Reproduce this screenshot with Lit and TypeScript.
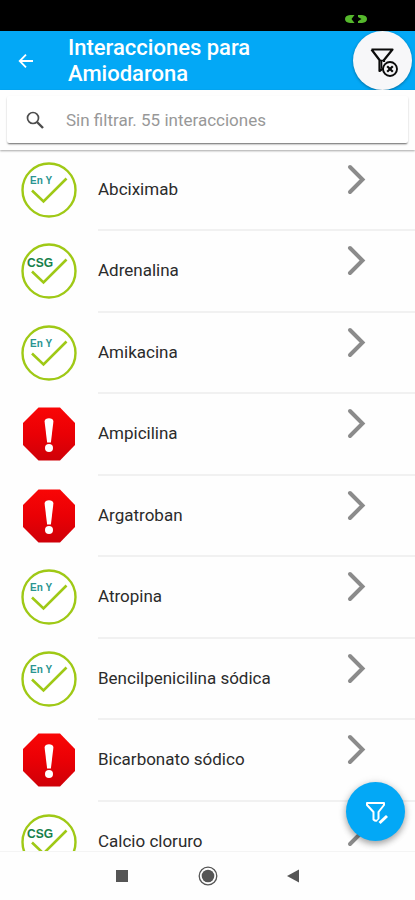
import { LitElement, html, css, svg } from "lit";
import { customElement, property } from "lit/decorators.js";

type Level = "eny" | "csg" | "stop";

interface Interaction {
  name: string;
  level: Level;
}

const INTERACTIONS: Interaction[] = [
  { name: "Abciximab", level: "eny" },
  { name: "Adrenalina", level: "csg" },
  { name: "Amikacina", level: "eny" },
  { name: "Ampicilina", level: "stop" },
  { name: "Argatroban", level: "stop" },
  { name: "Atropina", level: "eny" },
  { name: "Bencilpenicilina sódica", level: "eny" },
  { name: "Bicarbonato sódico", level: "stop" },
  { name: "Calcio cloruro", level: "csg" },
];

@customElement("compat-icon")
export class CompatIcon extends LitElement {
  @property() level: Level = "eny";

  static styles = css`
    :host {
      display: block;
      width: 56px;
      height: 56px;
    }
    svg {
      display: block;
    }
    .ring {
      fill: #fff;
      stroke: #9fc916;
      stroke-width: 2.4;
    }
    .check {
      fill: none;
      stroke: #9fc916;
      stroke-width: 2.6;
    }
    .tag {
      font-family: "Liberation Sans", Arial, sans-serif;
      font-weight: 700;
    }
    .eny {
      font-size: 10px;
      fill: #2a9490;
    }
    .csg {
      font-size: 12px;
      fill: #16804a;
    }
  `;

  render() {
    if (this.level === "stop") {
      return html`<svg width="56" height="56" viewBox="0 0 56 56" role="img" aria-label="Incompatible">
        <defs>
          <linearGradient id="red" x1="0" y1="0" x2="0" y2="1">
            <stop offset="0" stop-color="#f90606" />
            <stop offset="0.5" stop-color="#ea0005" />
            <stop offset="1" stop-color="#cf0008" />
          </linearGradient>
        </defs>
        <path d="M17.5 1.500h21.500L54 17v22L39 54.500H17.500L2 39V17z" fill="url(#red)" />
        <path d="M23.600 15.500c-.2-4.400 9-4.400 8.800 0L29.900 36.500h-3.800z" fill="#fff" />
        <circle cx="28" cy="42" r="4" fill="#fff" />
      </svg>`;
    }
    const label =
      this.level === "csg"
        ? svg`<text class="tag csg" x="6" y="24">CSG</text>`
        : svg`<text class="tag eny" x="9" y="22">En Y</text>`;
    return html`<svg width="56" height="56" viewBox="0 0 56 56">
      <circle class="ring" cx="28" cy="28" r="26.500" />
      <path class="check" d="M11 28.500 22.500 39.500 45.500 16.500" />
      ${label}
    </svg>`;
  }
}

@customElement("interaction-row")
export class InteractionRow extends LitElement {
  @property() name = "";
  @property() level: Level = "eny";

  static styles = css`
    :host {
      display: block;
      height: 100%;
    }
    .row {
      display: flex;
      box-sizing: border-box;
      height: 100%;
      width: 100%;
      padding: 0 0 0 21px;
      gap: 21px;
      border: 0;
      background: none;
      font: inherit;
      color: inherit;
      text-align: left;
      align-items: stretch;
    }
    compat-icon {
      align-self: center;
      flex: none;
      margin-bottom: 2px;
    }
    .body {
      flex: 1;
      display: flex;
      align-items: center;
      justify-content: space-between;
      border-bottom: 2px solid #f1f1f1;
      padding: 0 48px 2px 0;
    }
    .chevron {
      align-self: flex-start;
      margin-top: 14px;
      fill: none;
      stroke: #8b8b8b;
      stroke-width: 4;
      stroke-linecap: round;
    }
  `;

  render() {
    return html`<button class="row" type="button">
      <compat-icon .level=${this.level}></compat-icon>
      <span class="body">
        <span>${this.name}</span>
        <svg class="chevron" width="20" height="32" viewBox="0 0 20 32" aria-hidden="true">
          <path d="M3 3 15.500 15.500 3 28" />
        </svg>
      </span>
    </button>`;
  }
}

@customElement("app-root")
export class AppRoot extends LitElement {
  static styles = css`
    :host {
      display: flex;
      flex-direction: column;
      position: relative;
      height: 100vh;
      overflow: hidden;
      background: #fefefe;
      color: #2b2b2b;
      font-family: Roboto, sans-serif;
      font-size: 17px;
      line-height: 24px;
    }
    button {
      font: inherit;
      border: 0;
      padding: 0;
      cursor: pointer;
    }
    svg {
      display: block;
    }
    .status {
      flex: none;
      display: flex;
      justify-content: flex-end;
      align-items: flex-end;
      height: 31px;
      padding: 0 48px 7px 0;
      box-sizing: border-box;
      background: #000;
    }
    .bar {
      flex: none;
      display: flex;
      align-items: center;
      height: 59px;
      padding: 0 3px 0 16px;
      background: #03a8f6;
      color: #fff;
    }
    .back {
      background: none;
      color: inherit;
      margin-right: 32px;
    }
    h1 {
      flex: 1;
      margin: 0;
      max-width: 240px;
      font-size: 22px;
      line-height: 26px;
      font-weight: 500;
    }
    .clear {
      flex: none;
      display: grid;
      place-items: center;
      width: 59px;
      height: 59px;
      margin-left: auto;
      border-radius: 50%;
      background: #f7f7f9;
      box-shadow: 0 1px 3px rgba(0, 0, 0, 0.35);
    }
    .search {
      flex: none;
      position: relative;
      padding: 6px 7px 7px;
      background: #fefefe;
      box-shadow: 0 1px 2px rgba(0, 0, 0, 0.35);
    }
    .field {
      display: flex;
      align-items: center;
      gap: 21px;
      height: 47px;
      padding: 0 18px;
      border-radius: 2px;
      background: #fff;
      box-shadow: 0 2px 2px -1px rgba(0, 0, 0, 0.5), 0 1px 2px rgba(0, 0, 0, 0.16);
    }
    input {
      flex: 1;
      min-width: 0;
      border: 0;
      padding: 0;
      outline: 0;
      background: none;
      font: inherit;
      color: #444;
    }
    input::placeholder {
      color: #989898;
      opacity: 1;
    }
    .list {
      flex: 1;
      min-height: 0;
      margin: 0;
      padding: 0;
      overflow-y: auto;
      scrollbar-width: none;
      list-style: none;
    }
    .item {
      height: 81px;
    }
    .item:nth-child(even) {
      height: 82px;
    }
    .fab {
      position: absolute;
      right: 10px;
      bottom: 59px;
      display: grid;
      place-items: center;
      width: 59px;
      height: 59px;
      border-radius: 50%;
      background: #03a8f6;
      box-shadow: 0 3px 6px rgba(0, 0, 0, 0.3), 0 1px 10px rgba(0, 0, 0, 0.12);
    }
    .nav {
      flex: none;
      display: grid;
      grid-template-columns: repeat(3, 86px);
      justify-content: center;
      justify-items: center;
      align-items: center;
      height: 49px;
      background: #fefefe;
      border-top: 1px solid #f4f4f4;
      box-sizing: border-box;
    }
    .nav button {
      background: none;
    }
  `;

  render() {
    return html`
      <div class="status">
        <svg width="22" height="10" viewBox="0 0 22 10" aria-hidden="true">
          <path d="M9.500 1H5Q0 1.500 0 5t5 4h4.500L6.500 5z" fill="#55b82c" />
          <path d="M13 1h4q5 .5 5 4t-5 4h-4V7.200L16.500 5 13 3z" fill="#55b82c" />
        </svg>
      </div>
      <header class="bar">
        <button class="back" type="button" aria-label="Volver">
          <svg width="20" height="20" viewBox="0 0 20 20" fill="none" stroke="#fff" stroke-width="1.800">
            <path d="M17 10H4M10 3.700 3.700 10l6.300 6.300" />
          </svg>
        </button>
        <h1>Interacciones para Amiodarona</h1>
        <button class="clear" type="button" aria-label="Quitar filtro">
          <svg width="31" height="35" viewBox="0 0 31 35" fill="none" stroke="#0b0b0b">
            <path d="M4.500 6.500h21L17 17v2M4.500 6.500 12.500 17v11l3.500-2.500" stroke-width="2.200" stroke-linejoin="round" />
            <path d="M12.500 17.500h4.500" stroke-width="1.500" />
            <path d="M14.500 18v7" stroke-width="1.600" />
            <circle cx="23" cy="26" r="7" fill="#f7f7f9" stroke-width="1.900" />
            <path d="m20.200 23.200 5.600 5.600M25.800 23.200l-5.600 5.600" stroke-width="2.200" />
          </svg>
        </button>
      </header>
      <div class="search">
        <label class="field">
          <svg width="20" height="20" viewBox="0 0 20 20" fill="none" stroke="#4d4d4d" aria-hidden="true">
            <circle cx="8" cy="8" r="5.500" stroke-width="1.700" />
            <path d="m12 12 6 6" stroke-width="2.400" />
          </svg>
          <input type="text" aria-label="Filtrar" placeholder="Sin filtrar. 55 interacciones" />
        </label>
      </div>
      <ul class="list">
        ${INTERACTIONS.map(
          (i) => html`<li class="item">
            <interaction-row .name=${i.name} .level=${i.level}></interaction-row>
          </li>`
        )}
      </ul>
      <button class="fab" type="button" aria-label="Editar filtro">
        <svg width="26" height="26" viewBox="0 0 26 26" fill="none" stroke="#fff">
          <path d="M4 4h17v2l-5.500 7v7.500q-2.500 2.500-5 0V13L4 6z" stroke-width="2" stroke-linejoin="round" />
          <path d="m16 24.500 8-7.500" stroke="#03a8f6" stroke-width="6" />
          <path d="m16.500 24 7.500-7" stroke-width="3" />
        </svg>
      </button>
      <nav class="nav">
        <button type="button" aria-label="Recientes">
          <svg width="20" height="20" viewBox="0 0 20 20"><path d="M4 4h12v12H4z" fill="#555" /></svg>
        </button>
        <button type="button" aria-label="Inicio">
          <svg width="20" height="20" viewBox="0 0 20 20">
            <circle cx="10" cy="10" r="8.800" fill="none" stroke="#555" stroke-width="1.300" />
            <circle cx="10" cy="10" r="6.300" fill="#555" />
          </svg>
        </button>
        <button type="button" aria-label="Atrás">
          <svg width="20" height="20" viewBox="0 0 20 20"><path d="M15 3.500v13L3 10z" fill="#555" /></svg>
        </button>
      </nav>
    `;
  }
}
